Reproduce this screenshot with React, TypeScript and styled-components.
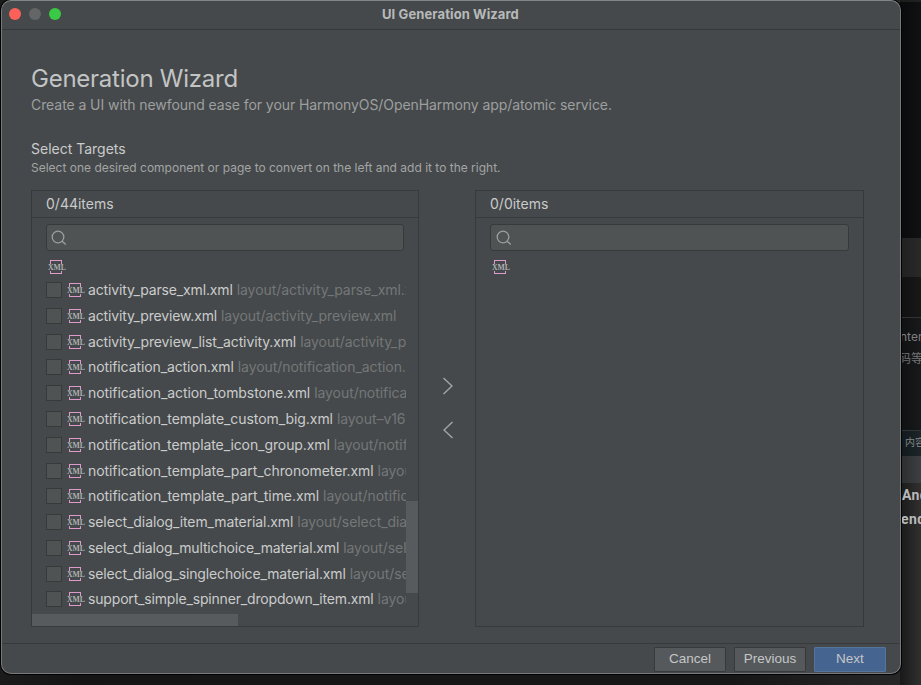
import React from "react";
import styled, { createGlobalStyle } from "styled-components";

const GlobalStyle = createGlobalStyle`
  * { box-sizing: border-box; }
  html, body { margin: 0; padding: 0; background: #151616; overflow: hidden; }
  body { font-family: Inter, "Noto Sans CJK SC", sans-serif; }
  svg { flex: none; display: block; }
`;

const Desktop = styled.div`
  position: relative;
  width: 921px;
  height: 685px;
  overflow: hidden;
  background: linear-gradient(90deg, #1b1b1b, #151515 8%, #171717 80%, #292929);
`;

const Backdrop = styled.div`
  position: absolute;
  top: 0;
  right: 0;
  width: 21px;
  height: 685px;
  display: flex;
  flex-direction: column;
`;

const Strip = styled.div<{ $h: number; $from: string; $to: string; $line?: string; $pad?: number }>`
  flex: none;
  height: ${(p) => p.$h}px;
  padding-top: ${(p) => p.$pad ?? 0}px;
  background: linear-gradient(90deg, ${(p) => p.$from}, ${(p) => p.$to});
  border-top: ${(p) => (p.$line ? `1px solid ${p.$line}` : "none")};
  overflow: hidden;
`;

const StripText = styled.div<{ $size: number; $lh: number; $color: string; $shift: number; $bold?: boolean }>`
  font-family: ${(p) => (p.$bold ? "Roboto" : 'Inter, "Noto Sans CJK SC"')}, sans-serif;
  font-weight: ${(p) => (p.$bold ? 700 : 400)};
  letter-spacing: ${(p) => (p.$bold ? 0.4 : 0)}px;
  font-size: ${(p) => p.$size}px;
  line-height: ${(p) => p.$lh}px;
  color: ${(p) => p.$color};
  margin-left: ${(p) => p.$shift}px;
  white-space: nowrap;
`;

const Window = styled.main`
  position: relative;
  width: 900px;
  height: 674px;
  margin-left: 1px;
  display: flex;
  flex-direction: column;
  background: #45494b;
  border: 1px solid #77797a;
  border-top-color: #808586;
  border-radius: 10px;
  box-shadow: 0 0 0 1px #020202;
  overflow: hidden;
`;

const TitleBar = styled.header`
  flex: none;
  height: 29px;
  border-bottom: 1px solid #36393a;
  display: flex;
  align-items: center;
  padding: 0 0 2px 7px;
  gap: 8px;
`;

const Light = styled.span<{ $color: string }>`
  width: 12px;
  height: 12px;
  border-radius: 50%;
  background: ${(p) => p.$color};
`;

const WindowTitle = styled.div`
  margin-left: 313px;
  font-size: 13px;
  font-weight: 700;
  line-height: 16px;
  letter-spacing: 0.1px;
  color: #b8baba;
  white-space: nowrap;
`;

const Content = styled.section`
  flex: 1;
  padding: 34px 36px 0 29px;
  display: flex;
  flex-direction: column;
`;

const Heading = styled.h1`
  margin: 0;
  font-size: 24px;
  line-height: 30px;
  font-weight: 400;
  letter-spacing: -0.25px;
  color: #c3c4c4;
`;

const Lead = styled.p`
  margin: 1px 0 0;
  font-size: 14px;
  line-height: 20px;
  letter-spacing: -0.073px;
  color: #9d9f9f;
  white-space: nowrap;
`;

const SubHeading = styled.h2`
  margin: 24px 0 0;
  font-size: 14px;
  line-height: 20px;
  font-weight: 400;
  color: #cacbcb;
`;

const Hint = styled.p`
  margin: 0;
  font-size: 12px;
  line-height: 18px;
  color: #a3a5a5;
  white-space: nowrap;
`;

const Transfer = styled.div`
  margin-top: 13px;
  display: grid;
  grid-template-columns: 388px 56px 389px;
  height: 437px;
`;

const Panel = styled.section`
  position: relative;
  min-width: 0;
  border: 1px solid #37393a;
  display: flex;
  flex-direction: column;
`;

const PanelHead = styled.div`
  flex: none;
  height: 27px;
  border-bottom: 1px solid #37393a;
  padding-left: 14px;
  font-size: 14px;
  line-height: 26px;
  color: #c9caca;
`;

const SearchBox = styled.div<{ $inset: number }>`
  flex: none;
  height: 27px;
  margin: 6px 14px 0;
  padding-left: ${(p) => p.$inset}px;
  display: flex;
  align-items: center;
  background: #505354;
  border: 1px solid #37393a;
  border-radius: 3px;
`;

const RootIcon = styled.div`
  flex: none;
  height: 26.3px;
  padding: 9px 0 0 16px;
`;

const List = styled.ul`
  width: 374px;
  margin: 0;
  padding: 0;
  list-style: none;
  overflow: hidden;
`;

const Item = styled.li`
  height: 25.77px;
  padding-left: 14px;
  display: flex;
  align-items: center;
  overflow: hidden;
  white-space: nowrap;
`;

const Check = styled.span`
  flex: none;
  width: 16px;
  height: 16px;
  margin-right: 5px;
  background: #505354;
  border: 1px solid #383a3a;
`;

const FileName = styled.span<{ $track: number }>`
  margin-left: 3px;
  font-size: 14px;
  line-height: 20px;
  letter-spacing: ${(p) => p.$track}px;
  color: #cbcccc;
`;

const FilePath = styled.span`
  margin-left: 4px;
  font-size: 14px;
  line-height: 20px;
  letter-spacing: -0.06px;
  color: #747778;
`;

const VerticalThumb = styled.span`
  position: absolute;
  right: 0;
  top: 310px;
  width: 12px;
  height: 92px;
  background: #575b5d;
`;

const HorizontalThumb = styled.span`
  position: absolute;
  left: 0;
  bottom: 0;
  width: 206px;
  height: 12px;
  background: #575b5d;
`;

const Arrows = styled.div`
  display: flex;
  flex-direction: column;
  align-items: center;
  padding: 187px 0 0 2px;
  gap: 26px;
`;

const Footer = styled.footer`
  flex: none;
  height: 30px;
  border-top: 1px solid #37393a;
  display: flex;
  justify-content: flex-end;
  padding: 3px 14px 0 0;
  gap: 8px;
`;

const Button = styled.button<{ $primary?: boolean }>`
  width: 72px;
  height: 25px;
  padding: 0 0 3px;
  border: 1px solid ${(p) => (p.$primary ? "#53759b" : "#37393a")};
  border-radius: 1px;
  background: ${(p) => (p.$primary ? "#456490" : "#55595b")};
  color: #c4c6c7;
  font-family: "Liberation Sans", sans-serif;
  font-size: 13.5px;
`;

const XmlIcon = () => (
  <svg width="18" height="14" viewBox="0 0 18 14">
    <path d="M2.5 4V.5H13.5V4M2.5 11V13.5H13.5V11" fill="none" stroke="#dd9bcb" shapeRendering="crispEdges" />
    <text x="0" y="10" textLength="18" lengthAdjust="spacingAndGlyphs" fontFamily="Liberation Serif" fontWeight="700" fontSize="9.2" fill="#acb0b1">XML</text>
  </svg>
);

const SearchIcon = () => (
  <svg width="16" height="16" viewBox="0 0 16 16" fill="none" stroke="#9b9fa0" strokeWidth="1.3">
    <circle cx="7" cy="7" r="5.8" />
    <path d="M11.2 11.2 14.7 14.4" />
  </svg>
);

const Chevron = ({ left }: { left?: boolean }) => (
  <svg width="12" height="18" viewBox="0 0 12 18" fill="none" stroke="#a5a8a9" strokeWidth="1.3">
    <path d={left ? "M10.5 1 2 9l8.5 8" : "M1.5 1 10 9l-8.5 8"} />
  </svg>
);

const files: { name: string; path: string; track: number }[] = [
  { name: "activity_parse_xml.xml", path: "layout/activity_parse_xml.xml", track: -0.15 },
  { name: "activity_preview.xml", path: "layout/activity_preview.xml", track: -0.15 },
  { name: "activity_preview_list_activity.xml", path: "layout/activity_preview_list_activity.xml", track: -0.12 },
  { name: "notification_action.xml", path: "layout/notification_action.xml", track: -0.1 },
  { name: "notification_action_tombstone.xml", path: "layout/notification_action_tombstone.xml", track: -0.08 },
  { name: "notification_template_custom_big.xml", path: "layout–v16/notification_template_custom_big.xml", track: -0.07 },
  { name: "notification_template_icon_group.xml", path: "layout/notification_template_icon_group.xml", track: -0.09 },
  { name: "notification_template_part_chronometer.xml", path: "layout/notification_template_part_chronometer.xml", track: -0.07 },
  { name: "notification_template_part_time.xml", path: "layout/notification_template_part_time.xml", track: -0.06 },
  { name: "select_dialog_item_material.xml", path: "layout/select_dialog_item_material.xml", track: -0.1 },
  { name: "select_dialog_multichoice_material.xml", path: "layout/select_dialog_multichoice_material.xml", track: -0.14 },
  { name: "select_dialog_singlechoice_material.xml", path: "layout/select_dialog_singlechoice_material.xml", track: -0.14 },
  { name: "support_simple_spinner_dropdown_item.xml", path: "layout/support_simple_spinner_dropdown_item.xml", track: -0.17 },
];

export default function App() {
  return (
    <>
      <GlobalStyle />
      <Desktop>
        <Backdrop>
          <Strip $h={2} $from="#1b1c1c" $to="#202121" />
          <Strip $h={236} $from="#090a0b" $to="#101112" />
          <Strip $h={39} $from="#202020" $to="#292929" />
          <Strip $h={40} $from="#101010" $to="#181818" />
          <Strip $h={113} $from="#0e1011" $to="#17191b" $line="#303233" $pad={8}>
            <StripText $size={12} $lh={22} $color="#7d7f80" $shift={0}>nter'</StripText>
            <StripText $size={12} $lh={22} $color="#727475" $shift={-1}>码等</StripText>
          </Strip>
          <Strip $h={26} $from="#11181b" $to="#1c2529" $line="#303436">
            <StripText $size={10} $lh={23} $color="#818485" $shift={5}>内容</StripText>
          </Strip>
          <Strip $h={27} $from="#2a2c2e" $to="#3d4042" />
          <Strip $h={202} $from="#191919" $to="#303030">
            <StripText $size={14} $lh={24} $color="#b7b8b8" $shift={2} $bold>And</StripText>
            <StripText $size={14} $lh={24} $color="#b7b8b8" $shift={1} $bold>end</StripText>
          </Strip>
        </Backdrop>
        <Window>
          <TitleBar>
            <Light $color="#fb6158" />
            <Light $color="#636567" />
            <Light $color="#3ac944" />
            <WindowTitle>UI Generation Wizard</WindowTitle>
          </TitleBar>
          <Content>
            <Heading>Generation Wizard</Heading>
            <Lead>Create a UI with newfound ease for your HarmonyOS/OpenHarmony app/atomic service.</Lead>
            <SubHeading>Select Targets</SubHeading>
            <Hint>Select one desired component or page to convert on the left and add it to the right.</Hint>
            <Transfer>
              <Panel>
                <PanelHead>0/44items</PanelHead>
                <SearchBox $inset={4}><SearchIcon /></SearchBox>
                <RootIcon><XmlIcon /></RootIcon>
                <List>
                  {files.map((f) => (
                    <Item key={f.name}>
                      <Check />
                      <XmlIcon />
                      <FileName $track={f.track}>{f.name}</FileName>
                      <FilePath>{f.path}</FilePath>
                    </Item>
                  ))}
                </List>
                <VerticalThumb />
                <HorizontalThumb />
              </Panel>
              <Arrows>
                <Chevron />
                <Chevron left />
              </Arrows>
              <Panel>
                <PanelHead>0/0items</PanelHead>
                <SearchBox $inset={5}><SearchIcon /></SearchBox>
                <RootIcon><XmlIcon /></RootIcon>
              </Panel>
            </Transfer>
          </Content>
          <Footer>
            <Button>Cancel</Button>
            <Button>Previous</Button>
            <Button $primary>Next</Button>
          </Footer>
        </Window>
      </Desktop>
    </>
  );
}
